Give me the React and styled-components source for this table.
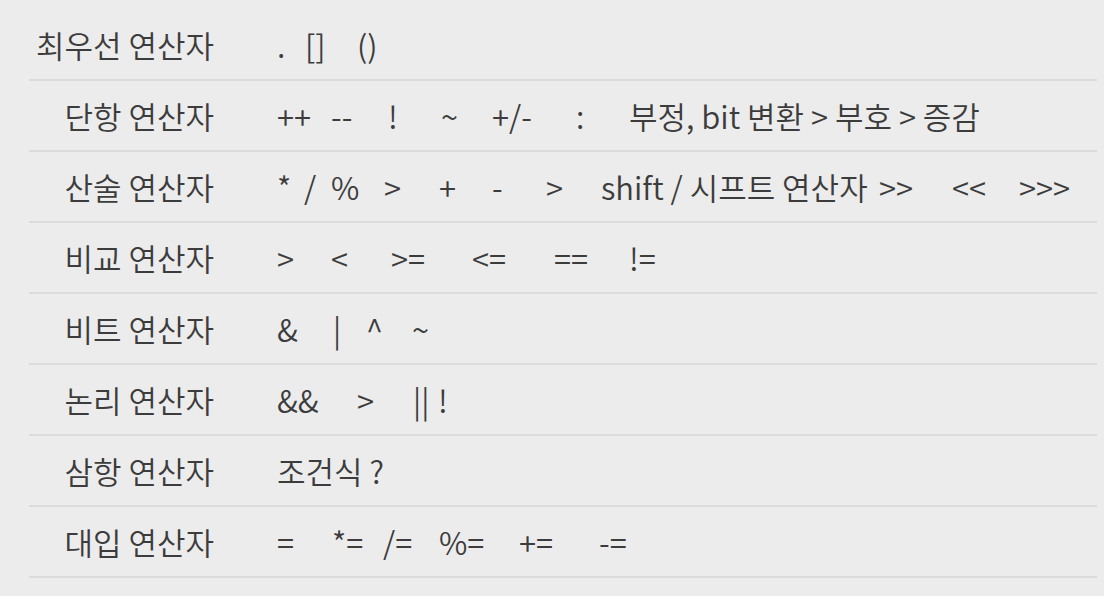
import React from 'react';
import styled, { createGlobalStyle } from 'styled-components';

const ROWS = [
  { label: '최우선 연산자', items: [['.', 28], ['[]', 52], ['()']] },
  {
    label: '단항 연산자',
    items: [['++', 54], ['--', 57], ['!', 53], ['~', 51], ['+/-', 84], [':', 53], ['부정, bit 변환 > 부호 > 증감']],
  },
  {
    label: '산술 연산자',
    items: [
      ['*', 27], ['/', 27], ['%', 53], ['>', 55], ['+', 53], ['-', 54], ['>', 55],
      ['shift / 시프트 연산자', 278], ['>>', 73], ['<<', 67], ['>>>'],
    ],
  },
  { label: '비교 연산자', items: [['>', 54], ['<', 60], ['>=', 81], ['<=', 82], ['==', 75], ['!=']] },
  { label: '비트 연산자', items: [['&', 56], ['|', 33], ['^', 46], ['~']] },
  { label: '논리 연산자', items: [['&&', 80], ['>', 56], ['||', 25], ['!']] },
  { label: '삼항 연산자', items: [['조건식 ?']] },
  { label: '대입 연산자', items: [['=', 55], ['*=', 51], ['/=', 56], ['%=', 80], ['+=', 80], ['-=']] },
];

const App = () => (
  <>
    <GlobalStyle />
    <Page>
      <Table>
        {ROWS.map((row) => (
          <Row key={row.label}>
            <Label>{row.label}</Label>
            <Value>
              {row.items.map(([text, width], i) => (
                <Token key={i} $w={width}>
                  {text}
                </Token>
              ))}
            </Value>
          </Row>
        ))}
      </Table>
    </Page>
  </>
);

export default App;

const GlobalStyle = createGlobalStyle`
  html, body {
    margin: 0;
    padding: 0;
    background: #ececec;
  }
  body {
    font-family: 'Noto Sans CJK KR', 'Noto Sans', sans-serif;
    color: #3c3c3c;
  }
`;

const Page = styled.div`
  width: 1104px;
  height: 596px;
  padding: 10px 7px 0 29px;
  box-sizing: border-box;
  background: #ececec;
  overflow: hidden;
`;

const Table = styled.div`
  display: flex;
  flex-direction: column;
  width: 1068px;
`;

const Row = styled.div`
  display: flex;
  align-items: center;
  height: 69px;
  border-bottom: 2px solid #dbdbdb;
  font-size: 31px;
  font-weight: 350;
  line-height: 1;
`;

const Label = styled.div`
  width: 185px;
  flex-shrink: 0;
  text-align: right;
  white-space: nowrap;
`;

const Value = styled.div`
  display: flex;
  align-items: center;
  padding-left: 63px;
  white-space: pre;
`;

const Token = styled.span`
  display: inline-block;
  width: ${({ $w }) => ($w ? `${$w}px` : 'auto')};
  flex-shrink: 0;
`;
